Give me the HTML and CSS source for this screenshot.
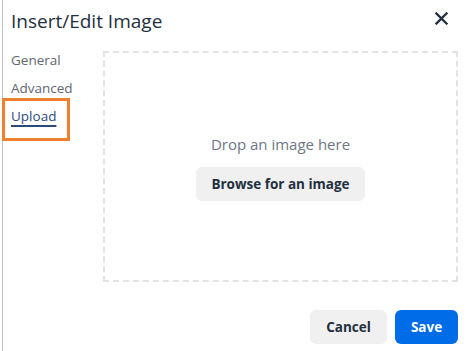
FILE: index.html
```html
<!DOCTYPE html>
<html lang="en">
<head>
<meta charset="utf-8">
<title>Insert/Edit Image</title>
<link rel="stylesheet" href="styles.css">
</head>
<body>
<div class="dialog">
  <header class="header">
    <h1 class="title">Insert/Edit Image</h1>
    <button class="close" aria-label="Close">
      <svg width="13" height="13" viewBox="0 0 13 13"><path d="M1.5 1.5 L11.5 11.5 M11.5 1.5 L1.5 11.5" stroke="#222f3e" stroke-width="2.3" stroke-linecap="square" fill="none"/></svg>
    </button>
  </header>
  <div class="body">
    <nav class="tabs">
      <div class="tab">General</div>
      <div class="tab">Advanced</div>
      <div class="tab active">Upload</div>
      <div class="highlight"></div>
    </nav>
    <div class="dropzone">
      <p class="drop-text">Drop an image here</p>
      <button class="btn btn-secondary browse">Browse for an image</button>
    </div>
  </div>
  <footer class="footer">
    <button class="btn btn-secondary">Cancel</button>
    <button class="btn btn-primary">Save</button>
  </footer>
</div>
</body>
</html>
```
FILE: styles.css
```css
html, body {
  margin: 0;
  padding: 0;
  background: #fff;
}
body {
  font-family: "Open Sans", "Noto Sans", sans-serif;
  color: #222f3e;
}
.dialog {
  margin-left: 2px;
  border-left: 1px solid #c4c4c4;
  height: 351px;
  box-sizing: border-box;
  display: flex;
  flex-direction: column;
  position: relative;
}
.header {
  height: 40px;
  display: flex;
  align-items: center;
  justify-content: space-between;
  padding: 0 23px 0 8px;
}
.title {
  margin: 0;
  font-size: 19px;
  font-weight: 400;
  line-height: 24px;
  color: #222f3e;
  padding-top: 1px;
}
.close {
  border: 0;
  background: none;
  padding: 0;
  width: 13px;
  height: 13px;
  display: flex;
  margin-top: -3px;
}
.body {
  display: flex;
  padding: 11px 11px 0 8px;
}
.tabs {
  width: 92px;
  display: flex;
  flex-direction: column;
  margin-top: -5px;
}
.tab {
  font-size: 13.5px;
  line-height: 28px;
  color: #5f6670;
  height: 28px;
}
.tab.active {
  color: #2b4a7e;
  text-decoration: underline;
  text-decoration-thickness: 2px;
  text-underline-offset: 4px;
}
.highlight {
  position: absolute;
  left: -1px;
  top: 98px;
  width: 62px;
  height: 37px;
  border: 3px solid #f0802c;
}
.dropzone {
  width: 355px;
  height: 231px;
  box-sizing: border-box;
  border: 2px dashed #e3e3e3;
  display: flex;
  flex-direction: column;
  align-items: center;
  justify-content: center;
  gap: 12px;
}
.drop-text {
  margin: 0;
  font-size: 15px;
  line-height: 22px;
  color: #6e7785;
}
.btn {
  font-family: "Open Sans", "Noto Sans", sans-serif;
  font-weight: 700;
  font-size: 13.5px;
  border: 0;
  border-radius: 6px;
  height: 34px;
  padding: 0 15px;
  white-space: nowrap;
  cursor: pointer;
}
.btn-secondary {
  background: #f0f0f0;
  color: #222f3e;
}
.btn-primary {
  background: #006ce7;
  color: #fff;
}
.footer {
  margin-top: auto;
  display: flex;
  justify-content: flex-end;
  gap: 8px;
  padding: 0 13px 7px 0;
}
.footer .btn-secondary {
  width: 77px;
}
.footer .btn-primary {
  width: 63px;
}
```
